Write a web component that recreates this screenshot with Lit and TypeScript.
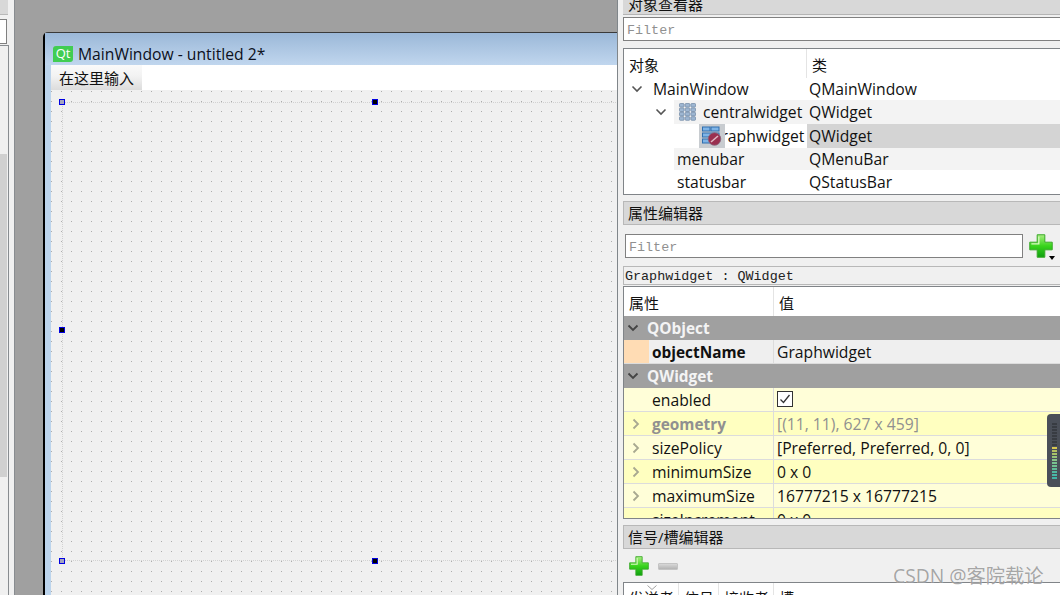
import { LitElement, html, css, svg } from "lit";
import { customElement } from "lit/decorators.js";

const chevDown = html`<svg class="chev" width="12" height="12" viewBox="0 0 12 12"><path d="M1.5 3.5 L6 8 L10.5 3.5" fill="none" stroke="#555" stroke-width="1.6"/></svg>`;
const chevRight = html`<svg class="chev" width="12" height="12" viewBox="0 0 12 12"><path d="M3.5 1.5 L8 6 L3.5 10.5" fill="none" stroke="#a8a890" stroke-width="1.8"/></svg>`;
const chevGroup = html`<svg class="chev" width="12" height="12" viewBox="0 0 12 12"><path d="M1.5 3.5 L6 8 L10.5 3.5" fill="none" stroke="#444" stroke-width="1.8"/></svg>`;

const plus = (s: number, id: string) => html`<svg width=${s} height=${s} viewBox="0 0 22 22">
  <defs><linearGradient id=${id} x1="0" y1="0" x2="0" y2="1"><stop offset="0" stop-color="#a8ee80"/><stop offset=".5" stop-color="#38d41c"/><stop offset="1" stop-color="#0f9e10"/></linearGradient></defs>
  <path d="M7.5 .7h7v6.8h6.8v7h-6.8v6.8h-7v-6.8H.7v-7h6.8z" fill=${`url(#${id})`} stroke="#38a828" stroke-width=".9"/>
  <path d="M9 2.2v6.8H2.2" fill="none" stroke="#d8f8c0" stroke-width="1.2"/></svg>`;

const gridIcon = html`<svg width="17" height="18" viewBox="0 0 17 18">${[0, 1, 2, 3].flatMap((r) =>
  [0, 1, 2].map((c) => svg`<rect x=${0.5 + c * 5.7} y=${0.5 + r * 4.4} width="4.6" height="3.6" rx=".8" fill="#9db6d2" stroke="#6f87a3" stroke-width=".7"/>`))}</svg>`;

const widgetIcon = html`<svg width="21" height="20" viewBox="0 0 21 20">
  <g fill="#7fb4e6" stroke="#2f6fb0" stroke-width="1">
    <rect x="1.5" y="1" width="7.5" height="4"/><rect x="10" y="1" width="8" height="4"/>
    <rect x="1.5" y="7" width="16.5" height="4"/>
    <rect x="1.5" y="13" width="8" height="4"/>
  </g>
  <circle cx="13.5" cy="13" r="6.3" fill="#9a3050" stroke="#8a6a80" stroke-width=".8"/>
  <path d="M10 16 L17 10" stroke="#e0b8c4" stroke-width="1.6"/></svg>`;

@customElement("app-root")
export class AppRoot extends LitElement {
  static styles = css`
    :host { display: block; width: 1060px; height: 595px; position: relative; overflow: hidden; background: #f0f0f0;
      font-family: "Open Sans", "Noto Sans CJK SC", sans-serif; font-size: 15.7px; color: #111; }
    * { box-sizing: border-box; }
    .root { display: flex; width: 1060px; height: 595px; }

    .left { width: 15px; flex: none; display: flex; flex-direction: column; border-right: 1px solid #888c90; }
    .lhead { height: 15px; width: 8px; background: #d8d8d8; border-bottom: 1px solid #b8b8b8; flex: none; }
    .linput { height: 25px; width: 7px; margin-top: 4px; background: #fff; border: 1px solid #808080; border-left: 0; flex: none; }
    .lbox { flex: 1; width: 9px; margin-top: 1px; background: #f0f0f0; border: 1px solid #888c90; border-left: 0; border-bottom: 0; padding-top: 108px; }
    .lscroll { height: 323px; width: 7px; background: #d0d0d0; }

    .canvas { width: 602px; flex: none; background: #a0a0a0; padding: 32px 0 0 28px; overflow: hidden; }
    .win { width: 700px; height: 600px; border: 1px solid #3a3a3a; border-right: 0; border-radius: 5px 0 0 0; border-left: 2px solid #000;
      background: #bcd4ec; display: flex; flex-direction: column; }
    .title { height: 32px; flex: none; display: flex; align-items: center; gap: 5px; padding: 9px 0 0 8px;
      background: linear-gradient(#9bb8d8, #c0d6ee); font-size: 15.7px; color: #0c1020; }
    .qt { width: 20px; height: 16px; background: #41cd52; color: #fff; font-size: 13px; line-height: 15px; text-align: center; border-radius: 3px 0 3px 0; font-weight: 400; }
    .client { flex: 1; margin-left: 6px; display: flex; flex-direction: column; }
    .menubar { height: 25px; flex: none; background: #fff; }
    .menu { width: 91px; height: 25px; padding-left: 8px; line-height: 26px; font-size: 15px; background: linear-gradient(#fafafa, #f2f2f2 45%, #dcdcdc 100%); }
    .form { flex: 1; position: relative; background-color: #f0f0f0;
      background-image: radial-gradient(circle at 0.5px 0.5px, #adadad 0.7px, transparent 0.8px); background-size: 10px 10px; background-position: 0 1px; }
    .sel { position: absolute; left: 11px; top: 12px; width: 700px; height: 459px; border: 1px dotted #d2d2d2; border-right: 0; }
    .h { position: absolute; width: 6px; height: 6px; background: #000; border: 1px solid #0000e0; }
    .h.g { background: #a4a4c0; }

    .right { flex: 1; display: flex; flex-direction: column; border-left: 1px solid #80868a; padding-left: 5px; min-width: 0; }
    .dock { height: 15px; background: #d8d8d8; border-bottom: 1px solid #b4b4b4; font-size: 15px; padding-left: 5px; line-height: 9px; overflow: hidden; flex: none; }
    .dock.full { height: 24px; border: 1px solid #b8b8b8; border-right: 0; line-height: 23px; padding-left: 4px; margin-top: 6px; }
    .input { height: 24px; background: #fff; border: 1px solid #808080; font-family: "Liberation Mono", monospace; font-size: 13.4px; color: #909090; padding: 1px 0 0 3px; line-height: 24px; flex: none; }
    .i1 { margin-top: 2px; border-right: 0; }
    .tree { margin-top: 7px; height: 147px; background: #fff; border: 1px solid #808488; border-right: 0; flex: none; }
    .hd { display: flex; height: 29px; line-height: 32px; font-size: 15px; }
    .hd > div { border-right: 1px solid #e4e4e4; padding-left: 5px; }
    .hd .c1 { width: 183px; }
    .hd .c2 { padding-left: 5px; border: 0; }
    .tr { display: flex; align-items: stretch; }
    .h22 { height: 22px; }
    .h24 { height: 24px; }
    .tc1 { width: 183px; flex: none; display: flex; align-items: center; position: relative; white-space: nowrap; overflow: hidden; }
    .tc2 { flex: 1; padding-left: 2px; display: flex; align-items: center; }
    .alt { background: #f3f3f3; }
    .chev { flex: none; }
    .alt-from { position: absolute; top: 0; bottom: 0; left: 50px; right: 0; background: #f3f3f3; }
    .tc1 > *:not(.alt-from) { position: relative; }
    .sel2 { background: #d4d4d4; }
    .ind7 { padding-left: 7px; }
    .ind31 { padding-left: 31px; }
    .ind53 { padding-left: 53px; }
    .ind75 { padding-left: 75px; }
    .exp22 { width: 22px; display: flex; }
    .exp21 { width: 21px; display: flex; }
    .gridslot { width: 27px; display: flex; align-items: center; padding-left: 3px; }
    .ico-sel { background: #c8ccd0; width: 26px; height: 24px; display: flex; align-items: center; padding-left: 2px; flex: none; z-index: 1; }
    .under { margin-left: -15px; }

    .prow { display: flex; align-items: center; height: 24px; margin-top: 9px; padding-left: 2px; flex: none; }
    .prow .input { width: 398px; }
    .addbtn { position: relative; margin-left: 6px; width: 30px; height: 24px; display: flex; align-items: center; }
    .tri { position: absolute; left: 20px; bottom: -2px; width: 0; height: 0; border: 3.5px solid transparent; border-top: 4px solid #000; border-bottom: 0; }
    .cls { margin-top: 8px; height: 19px; border-top: 1px solid #b8b8b8; border-bottom: 1px solid #b8b8b8; border-left: 1px solid #b8b8b8; font-family: "Liberation Mono", monospace; font-size: 13.4px; color: #222; padding-left: 1px; line-height: 19px; flex: none; }
    .ptable { margin-top: 1px; height: 233px; overflow: hidden; border: 1px solid #808488; border-right: 0; background: #fff; flex: none; }
    .phd { display: flex; height: 29px; line-height: 32px; font-size: 15px; }
    .phd .a { width: 150px; padding-left: 5px; border-right: 1px solid #e4e4e4; }
    .phd .b { padding-left: 5px; }
    .gr { height: 24px; background: #a0a0a0; color: #f4f4f4; font-weight: 700; display: flex; align-items: center; padding-left: 3px; gap: 8px; font-size: 15.4px; }
    .p { height: 24px; display: flex; border-bottom: 1px solid #dcdcdc; flex: none; }
    .p.y { background: #fffed8; }
    .p.y2 { background: #ffffc0; }
    .p .m { width: 25px; flex: none; display: flex; align-items: center; padding-left: 6px; }
    .p .n { width: 125px; flex: none; padding-left: 3px; line-height: 25px; border-right: 1px solid #dcdcdc; }
    .p .v { flex: 1; padding-left: 3px; line-height: 25px; }
    .p.o { background: #efefef; }
    .p.o .m { background: #ffdcb4; }
    .p .b { font-weight: 700; font-size: 15.4px; }
    .mut { color: #909090; }
    .check { display: block; width: 16px; height: 16px; border: 1px solid #333; background: #fff; margin-top: 3px; }
    .check svg { display: block; }

    .btns { display: flex; gap: 9px; align-items: flex-start; padding: 7px 0 0 6px; height: 33px; flex: none; }
    .minus { width: 20px; height: 7px; margin-top: 7px; border-radius: 1px; background: linear-gradient(#d8d8d8, #b4b4b4); border: 1px solid #c4c4c4; }
    .stable { flex: 1; background: #fff; border: 1px solid #808488; border-right: 0; border-bottom: 0; display: flex; overflow: hidden; position: relative; font-size: 15px; }
    .cell { height: 30px; border-right: 1px solid #e4e4e4; padding: 4px 0 0 5px; white-space: nowrap; flex: none; }
    .w55 { width: 55px; }
    .w40 { width: 40px; }
    .last { border: 0; }
    .sort { position: absolute; left: 23px; top: 2px; }

    .watermark { position: absolute; left: 893px; top: 561px; font-size: 19.3px; color: rgba(110,110,110,.62); white-space: nowrap; text-shadow: 0 0 1px rgba(255,255,255,.8); }
    .meter { position: absolute; left: 1047px; top: 414px; width: 13px; height: 73px; background: #4a4f58; border-radius: 4px 0 0 4px; display: flex; flex-direction: column; gap: 1px; padding: 9px 0 0 5px; }
    .meter i { display: block; width: 5px; height: 2px; }
  `;

  render() {
    const ledColors = ["#383c42","#383c42","#383c42","#383c42","#383c42","#383c42","#383c42","#383c42","#d8c850","#b4c060","#a8c468","#98c478","#88c488","#78c290","#70c090","#60bc98","#50b8a0","#48b8a8","#40b4a8"];
    return html`
      <div class="root">
        <div class="left"><div class="lhead"></div><div class="linput"></div><div class="lbox"><div class="lscroll"></div></div></div>
        <div class="canvas">
          <div class="win">
            <div class="title"><span class="qt">Qt</span><span>MainWindow - untitled 2*</span></div>
            <div class="client">
              <div class="menubar"><div class="menu">在这里输入</div></div>
              <div class="form">
                <div class="sel"></div>
                <div class="h g" style="left:8px;top:9px"></div>
                <div class="h" style="left:321px;top:9px"></div>
                <div class="h" style="left:8px;top:237px"></div>
                <div class="h g" style="left:8px;top:468px"></div>
                <div class="h" style="left:321px;top:468px"></div>
              </div>
            </div>
          </div>
        </div>
        <div class="right">
          <div class="dock">对象查看器</div>
          <div class="input i1">Filter</div>
          <div class="tree">
            <div class="hd"><div class="c1">对象</div><div class="c2">类</div></div>
            <div class="tr h22"><div class="tc1 ind7"><span class="exp22">${chevDown}</span><span>MainWindow</span></div><div class="tc2">QMainWindow</div></div>
            <div class="tr h24"><div class="tc1 ind31"><div class="alt-from"></div><span class="exp21">${chevDown}</span><span class="gridslot">${gridIcon}</span><span>centralwidget</span></div><div class="tc2 alt">QWidget</div></div>
            <div class="tr h24"><div class="tc1 ind75"><div class="ico-sel">${widgetIcon}</div><span class="under">Graphwidget</span></div><div class="tc2 sel2">QWidget</div></div>
            <div class="tr h22"><div class="tc1 ind53"><div class="alt-from"></div><span>menubar</span></div><div class="tc2 alt">QMenuBar</div></div>
            <div class="tr h24"><div class="tc1 ind53"><span>statusbar</span></div><div class="tc2">QStatusBar</div></div>
          </div>
          <div class="dock full">属性编辑器</div>
          <div class="prow"><div class="input">Filter</div><div class="addbtn">${plus(24, "pa")}<div class="tri"></div></div></div>
          <div class="cls">Graphwidget : QWidget</div>
          <div class="ptable">
            <div class="phd"><div class="a">属性</div><div class="b">值</div></div>
            <div class="gr">${chevGroup}<span>QObject</span></div>
            <div class="p o"><div class="m"></div><div class="n b">objectName</div><div class="v">Graphwidget</div></div>
            <div class="gr">${chevGroup}<span>QWidget</span></div>
            <div class="p y"><div class="m"></div><div class="n">enabled</div><div class="v"><span class="check"><svg width="14" height="14" viewBox="0 0 14 14"><path d="M2.5 7.5 L5.5 10.5 L11.5 3" fill="none" stroke="#333" stroke-width="1.3"/></svg></span></div></div>
            <div class="p y2"><div class="m">${chevRight}</div><div class="n b mut">geometry</div><div class="v mut">[(11, 11), 627 x 459]</div></div>
            <div class="p y"><div class="m">${chevRight}</div><div class="n">sizePolicy</div><div class="v">[Preferred, Preferred, 0, 0]</div></div>
            <div class="p y2"><div class="m">${chevRight}</div><div class="n">minimumSize</div><div class="v">0 x 0</div></div>
            <div class="p y"><div class="m">${chevRight}</div><div class="n">maximumSize</div><div class="v">16777215 x 16777215</div></div>
            <div class="p y2"><div class="m"></div><div class="n">sizeIncrement</div><div class="v">0 x 0</div></div>
          </div>
          <div class="dock full">信号/槽编辑器</div>
          <div class="btns">${plus(20, "pb")}<div class="minus"></div></div>
          <div class="stable">
            <div class="cell w55">发送者</div><div class="cell w40">信号</div><div class="cell w55">接收者</div><div class="cell last">槽</div>
            <svg class="sort" width="10" height="5" viewBox="0 0 10 5"><path d="M.5 .5 L5 4.5 L9.5 .5" fill="none" stroke="#a0a0a0"/></svg>
          </div>
        </div>
      </div>
      <div class="watermark">CSDN @客院载论</div>
      <div class="meter">${ledColors.map((c) => html`<i style="background:${c}"></i>`)}</div>
    `;
  }
}
